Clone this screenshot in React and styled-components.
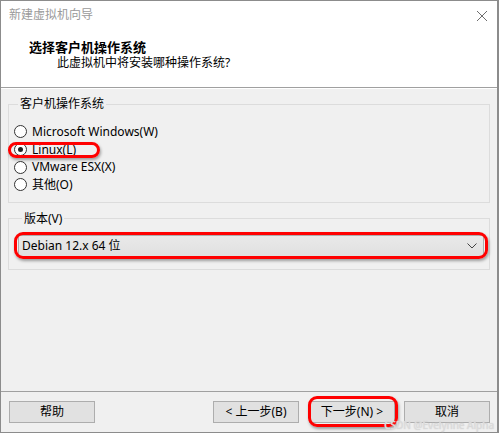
import styled, { createGlobalStyle } from 'styled-components';

const GlobalStyle = createGlobalStyle`
  html, body {
    margin: 0;
    padding: 0;
    background: #f0f0f0;
  }
  body {
    font-family: "Noto Sans", "Noto Sans CJK SC", sans-serif;
    font-size: 12px;
    color: #000;
  }
`;

const osList = [
  { label: 'Microsoft Windows(W)' },
  { label: 'Linux(L)', checked: true, marked: true },
  { label: 'VMware ESX(X)' },
  { label: '其他(O)' },
];

const App = () => {
  return (
    <>
      <GlobalStyle />
      <Window>
        <Header>
          <TitleRow>
            <Title>新建虚拟机向导</Title>
            <Close>
              <svg width="12" height="12" viewBox="0 0 12 12">
                <path d="M1 1 L11 11 M11 1 L1 11" stroke="#6e6e6e" strokeWidth="1" fill="none" />
              </svg>
            </Close>
          </TitleRow>
          <Heading>选择客户机操作系统</Heading>
          <Subtitle>此虚拟机中将安装哪种操作系统?</Subtitle>
        </Header>

        <Body>
          <Group>
            <Legend>客户机操作系统</Legend>
            <RadioList>
              {osList.map((os) => (
                <RadioRow key={os.label}>
                  <Radio $checked={os.checked} />
                  <span>{os.label}</span>
                  {os.marked && <Mark $w={92} $h={16} $l={-6} $t={1} />}
                </RadioRow>
              ))}
            </RadioList>
          </Group>

          <Group $second>
            <Legend>版本(V)</Legend>
            <Combo>
              <span>Debian 12.x 64 位</span>
              <svg width="10" height="6" viewBox="0 0 10 6">
                <path d="M0.5 0.5 L5 5 L9.5 0.5" stroke="#444" strokeWidth="1" fill="none" />
              </svg>
              <Mark $w={474} $h={27} $l={-5} $t={-4} />
            </Combo>
          </Group>
        </Body>

        <Footer>
          <Button>帮助</Button>
          <Spacer />
          <Button>&lt; 上一步(B)</Button>
          <Button $gap={10}>
            下一步(N) &gt;
            <Mark $w={90} $h={31} $l={-2} $t={-6} />
          </Button>
          <Button $gap={9}>取消</Button>
          <Watermark>CSDN @Evelynne Alpha</Watermark>
        </Footer>
      </Window>
    </>
  );
};

export default App;

const Window = styled.div`
  width: 499px;
  height: 433px;
  box-sizing: border-box;
  border: 1px solid #8c8c8c;
  border-right-width: 2px;
  background: #f0f0f0;
  display: flex;
  flex-direction: column;
`;

const Header = styled.div`
  height: 86px;
  background: #fff;
  border-bottom: 1px solid #a0a0a0;
  box-shadow: 0 1px 0 #ffffff;
  flex-shrink: 0;
`;

const TitleRow = styled.div`
  display: flex;
  align-items: center;
  justify-content: space-between;
  height: 16px;
  padding: 6px 8px 0 8px;
`;

const Title = styled.div`
  color: #9a9a9a;
  line-height: 16px;
`;

const Close = styled.div`
  display: flex;
  margin-right: 1px;
  margin-top: 2px;
`;

const Heading = styled.div`
  margin: 16px 0 0 28px;
  font-weight: bold;
  font-size: 13px;
  line-height: 16px;
`;

const Subtitle = styled.div`
  margin-left: 56px;
  line-height: 16px;
`;

const Body = styled.div`
  flex: 1;
  padding: 8px 7px 0 7px;
`;

const Group = styled.fieldset`
  margin: ${(p) => (p.$second ? '8px' : '0')} 0 0 0;
  padding: ${(p) => (p.$second ? '8px 5px 12px 9px' : '11px 5px 8px 5px')};
  border: 1px solid #dcdcdc;
  min-width: 0;
`;

const Legend = styled.legend`
  padding: 0 2px;
  margin-left: 4px;
  line-height: 16px;
`;

const RadioList = styled.div`
  display: flex;
  flex-direction: column;
`;

const RadioRow = styled.div`
  position: relative;
  display: flex;
  align-items: center;
  gap: 5px;
  height: 17.7px;
  line-height: 16px;
`;

const Radio = styled.span`
  width: 11px;
  height: 11px;
  border: 1px solid #333;
  border-radius: 50%;
  background: #fff;
  display: inline-flex;
  align-items: center;
  justify-content: center;
  flex-shrink: 0;

  &::after {
    content: '';
    width: 5px;
    height: 5px;
    border-radius: 50%;
    background: #222;
    display: ${(p) => (p.$checked ? 'block' : 'none')};
  }
`;

const Mark = styled.span`
  position: absolute;
  left: ${(p) => p.$l}px;
  top: ${(p) => p.$t}px;
  width: ${(p) => p.$w}px;
  height: ${(p) => p.$h}px;
  box-sizing: border-box;
  border: 3px solid #ff0000;
  border-radius: 9px;
  box-shadow: 1px 2px 3px rgba(0, 0, 0, 0.35);
  pointer-events: none;
`;

const Combo = styled.div`
  position: relative;
  height: 22px;
  box-sizing: border-box;
  border: 1px solid #adadad;
  background: linear-gradient(#e9e9e9, #e0e0e0);
  display: flex;
  align-items: center;
  justify-content: space-between;
  padding: 0 6px 0 3px;
  line-height: 16px;
`;

const Footer = styled.div`
  position: relative;
  height: 41px;
  box-sizing: border-box;
  border-top: 1px solid #a0a0a0;
  display: flex;
  align-items: flex-start;
  padding: 9px 7px 0 8px;
  flex-shrink: 0;
`;

const Spacer = styled.div`
  flex: 1;
`;

const Button = styled.div`
  position: relative;
  width: 86px;
  height: 22px;
  box-sizing: border-box;
  margin-left: ${(p) => p.$gap || 0}px;
  border: 1px solid #adadad;
  background: #e1e1e1;
  display: flex;
  align-items: center;
  justify-content: center;
  line-height: 14px;
  font-size: 12px;
`;

const Watermark = styled.div`
  position: absolute;
  right: 3px;
  bottom: 1px;
  font-size: 10px;
  line-height: 11px;
  color: #d8d8d8;
  text-shadow: 0 0 1px #fff, 0 0 1px #aaa;
  pointer-events: none;
`;
